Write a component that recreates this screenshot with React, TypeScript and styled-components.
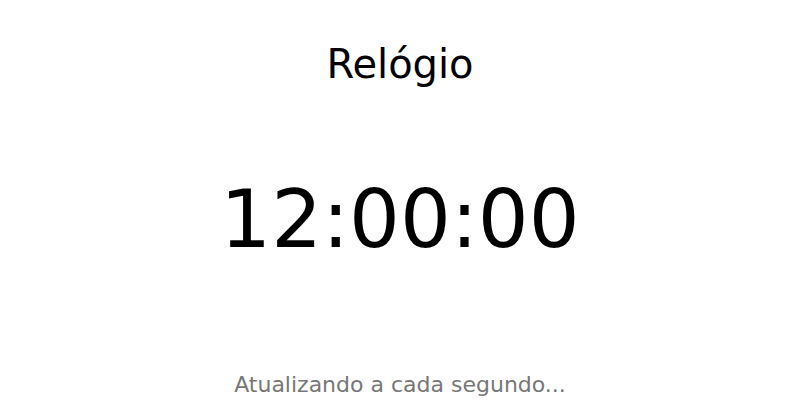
import React from "react";
import styled, { createGlobalStyle } from "styled-components";

const Global = createGlobalStyle`
  html, body { margin: 0; padding: 0; background: #fff; }
  body { font-family: "DejaVu Sans", sans-serif; }
`;

const Page = styled.main`
  height: 420px;
  display: flex;
  flex-direction: column;
  align-items: center;
  box-sizing: border-box;
  padding-top: 41px;
`;

const Title = styled.h1`
  margin: 0;
  font-size: 40px;
  font-weight: normal;
  color: #000;
`;

const Clock = styled.div`
  margin-top: 86px;
  font-size: 80px;
  color: #000;
`;

const Footer = styled.p`
  margin: 0;
  margin-top: auto;
  margin-bottom: 23px;
  font-size: 22px;
  color: #777;
`;

export default function App() {
  return (
    <>
      <Global />
      <Page>
        <Title>Relógio</Title>
        <Clock>12:00:00</Clock>
        <Footer>Atualizando a cada segundo...</Footer>
      </Page>
    </>
  );
}
